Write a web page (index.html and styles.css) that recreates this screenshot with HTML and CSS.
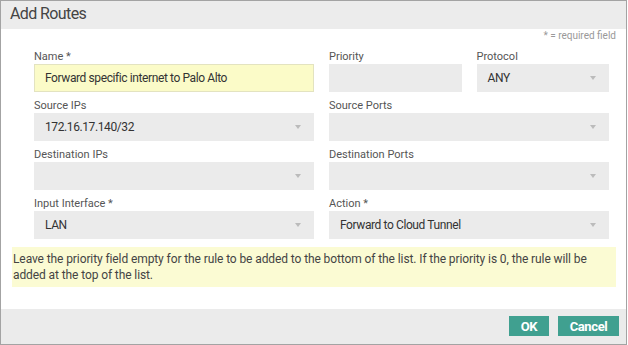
FILE: index.html
```html
<!DOCTYPE html>
<html lang="en">

<head>
    <meta charset="UTF-8">
    <meta name="viewport" content="width=device-width, initial-scale=1.0">
    <title>Add Routes</title>
    <link rel="stylesheet" href="styles.css">
</head>

<body>
    <div class="dialog">
        <div class="dialog-header">Add Routes</div>

        <div class="dialog-body">
            <div class="required-note">* = required field</div>

            <div class="form-grid">
                <div class="field">
                    <label>Name *</label>
                    <div class="input input-highlight">Forward specific internet to Palo Alto</div>
                </div>
                <div class="split">
                    <div class="field">
                        <label>Priority</label>
                        <div class="input"></div>
                    </div>
                    <div class="field">
                        <label>Protocol</label>
                        <div class="input select">ANY</div>
                    </div>
                </div>

                <div class="field">
                    <label>Source IPs</label>
                    <div class="input select">172.16.17.140/32</div>
                </div>
                <div class="field">
                    <label>Source Ports</label>
                    <div class="input select"></div>
                </div>

                <div class="field">
                    <label>Destination IPs</label>
                    <div class="input select"></div>
                </div>
                <div class="field">
                    <label>Destination Ports</label>
                    <div class="input select"></div>
                </div>

                <div class="field">
                    <label>Input Interface *</label>
                    <div class="input select">LAN</div>
                </div>
                <div class="field">
                    <label>Action *</label>
                    <div class="input select">Forward to Cloud Tunnel</div>
                </div>
            </div>

            <div class="info">
                Leave the priority field empty for the rule to be added to the bottom of the list. If the priority is 0, the rule will be added at the top of the list.
            </div>
        </div>

        <div class="dialog-footer">
            <button class="btn btn-ok">OK</button>
            <button class="btn btn-cancel">Cancel</button>
        </div>
    </div>
</body>

</html>
```

FILE: styles.css
```css
body {
    font-family: Roboto, 'Liberation Sans', sans-serif;
    margin: 0;
    padding: 0;
    background-color: #fff;
}

.dialog {
    width: 627px;
    height: 345px;
    box-sizing: border-box;
    border: 1px solid #a3a3a3;
    display: flex;
    flex-direction: column;
    background-color: #fff;
}

.dialog-header {
    height: 28px;
    line-height: 26px;
    padding-left: 9px;
    font-size: 16px;
    letter-spacing: -0.6px;
    color: #444;
    background-color: #ececec;
}

.required-note {
    height: 14px;
    line-height: 14px;
    padding-right: 10px;
    text-align: right;
    font-size: 10px;
    color: #999;
}

.form-grid {
    display: grid;
    grid-template-columns: 1fr 1fr;
    column-gap: 15px;
    padding: 0 17px 0 33px;
}

.split {
    display: grid;
    grid-template-columns: 1fr 1fr;
    column-gap: 15px;
}

.field label {
    display: block;
    padding-top: 7px;
    line-height: 14px;
    font-size: 11px;
    color: #555;
}

.input {
    position: relative;
    height: 28px;
    line-height: 28px;
    box-sizing: border-box;
    padding-left: 11px;
    font-size: 12px;
    letter-spacing: -0.4px;
    color: #333;
    background-color: #ebebeb;
}

.input-highlight {
    background-color: #fbfbc8;
    border: 1px solid #e3e3c0;
    line-height: 26px;
    padding-left: 10px;
}

/* dropdown arrow */
.select::after {
    content: "";
    position: absolute;
    right: 13px;
    top: 12px;
    border-left: 3px solid transparent;
    border-right: 3px solid transparent;
    border-top: 4px solid #bbb;
}

.info {
    margin: 8px 10px 0 11px;
    padding: 4px 0 4px 1px;
    line-height: 16px;
    font-size: 12px;
    letter-spacing: -0.1px;
    color: #444;
    background-color: #fbfbd3;
}

.dialog-footer {
    margin-top: auto;
    height: 35px;
    box-sizing: border-box;
    padding: 7px 7px 0 0;
    display: flex;
    justify-content: flex-end;
    gap: 9px;
    background-color: #ebebeb;
}

.btn {
    height: 20px;
    padding: 0;
    border: none;
    font-family: Roboto, 'Liberation Sans', sans-serif;
    font-size: 13px;
    font-weight: bold;
    letter-spacing: -0.4px;
    color: #fff;
    background-color: #40a090;
    cursor: pointer;
}

.btn-ok {
    width: 40px;
}

.btn-cancel {
    width: 61px;
}
```
